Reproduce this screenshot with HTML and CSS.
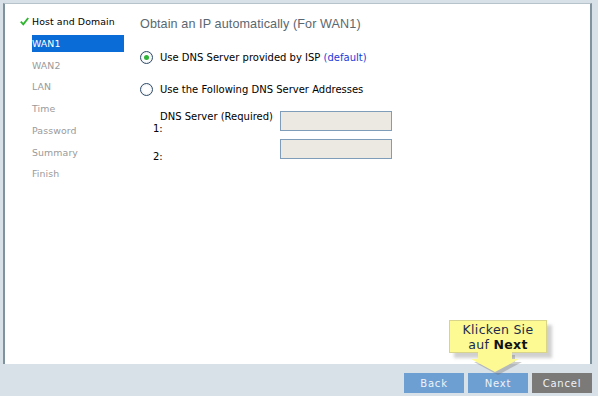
FILE: index.html
```html
<!DOCTYPE html>
<html lang="en">
<head>
  <meta charset="UTF-8" />
  <title>Setup Wizard - DNS</title>
  <link rel="stylesheet" href="styles.css">
</head>
<body>
  <div class="wizard">
    <div class="panel">
      <ul class="steps">
        <li class="step done">
          <svg class="check" width="9" height="9" viewBox="0 0 9 9"><path d="M0.8 4.6 L3.3 7.3 L8.2 1" fill="none" stroke="#2fb52f" stroke-width="1.9"/></svg>
          Host and Domain
        </li>
        <li class="step current">WAN1</li>
        <li class="step">WAN2</li>
        <li class="step">LAN</li>
        <li class="step">Time</li>
        <li class="step">Password</li>
        <li class="step">Summary</li>
        <li class="step">Finish</li>
      </ul>
      <div class="content">
        <h1 class="title">Obtain an IP automatically (For WAN1)</h1>
        <label class="option">
          <span class="radio checked"></span>
          <span>Use DNS Server provided by ISP <span class="hint">(default)</span></span>
        </label>
        <label class="option">
          <span class="radio"></span>
          <span>Use the Following DNS Server Addresses</span>
        </label>
        <div class="fields">
          <div class="field">
            <div class="field-label"><span class="req">DNS Server (Required)</span><span class="num">1:</span></div>
            <div class="input"></div>
          </div>
          <div class="field">
            <div class="field-label"><span class="num">2:</span></div>
            <div class="input"></div>
          </div>
        </div>
      </div>
    </div>
    <div class="footer">
      <button class="btn blue">Back</button>
      <button class="btn blue">Next</button>
      <button class="btn gray">Cancel</button>
      <div class="tip">
        Klicken Sie<br>auf <b>Next</b>
        <svg class="tip-arrow" width="54" height="24" viewBox="0 0 54 24">
          <polygon points="10,3 44,3 44,10 51,10 27,23 3,10 10,10" fill="rgba(110,110,110,0.35)"/>
          <polygon points="7,0 41,0 41,7 48,7 24,20 0,7 7,7" fill="#fdfa93"/>
        </svg>
      </div>
    </div>
  </div>
</body>
</html>
```

FILE: styles.css
```css
* {
  box-sizing: border-box;
  margin: 0;
  padding: 0;
}
body {
  width: 598px;
  height: 396px;
  background: #d9e1e8;
  font-family: Tahoma, "DejaVu Sans", sans-serif;
  font-size: 10px;
  color: #000;
  overflow: hidden;
}
.wizard {
  padding: 3px 6px 0 3px;
  height: 396px;
  display: flex;
  flex-direction: column;
}
.panel {
  height: 361px;
  background: #fff;
  border-top: 1px solid #b7c3cb;
  border-left: 2px solid #7f939f;
  border-right: 2px solid #7f939f;
  display: flex;
}
.steps {
  list-style: none;
  width: 135px;
  padding: 9px 0 0 14px;
  font-size: 9.4px;
}
.step {
  height: 21.75px;
  line-height: 17px;
  padding-left: 13px;
  color: #9a9a9a;
  letter-spacing: 0.1px;
}
.step.done {
  color: #000;
  position: relative;
}
.check {
  position: absolute;
  left: 1px;
  top: 4px;
}
.step.current {
  margin-left: 13px;
  padding-left: 0;
  width: 92px;
  height: 17px;
  margin-bottom: 4.75px;
  background: #0a6cd6;
  color: #fff;
}
.content {
  padding: 10px 0 0 0;
}
.title {
  font-family: "Liberation Sans", Arial, sans-serif;
  font-size: 12.6px;
  font-weight: normal;
  color: #5b6770;
  line-height: 20px;
  margin-bottom: 16px;
  letter-spacing: 0.1px;
}
.option {
  display: flex;
  align-items: center;
  gap: 7px;
  height: 14px;
  margin-bottom: 18px;
}
.hint {
  color: #1a3bd6;
}
.radio {
  width: 13px;
  height: 13px;
  border-radius: 50%;
  border: 1px solid #2d4a69;
  background: radial-gradient(circle, #fff 40%, #dfe3e8 100%);
  display: flex;
  align-items: center;
  justify-content: center;
}
.radio.checked::after {
  content: "";
  width: 5px;
  height: 5px;
  border-radius: 50%;
  background: #2fb33a;
}
.fields {
  padding-left: 13px;
  margin-top: -4px;
}
.field {
  display: flex;
  height: 28px;
}
.field-label {
  width: 127px;
  display: flex;
  flex-direction: column;
  justify-content: flex-end;
  padding-bottom: 3px;
}
.req {
  padding-left: 7px;
  line-height: 12px;
}
.num {
  line-height: 12px;
}
.input {
  width: 112px;
  height: 20px;
  margin-top: 1px;
  background: #ece9e2;
  border: 1px solid #7f9db9;
}
.footer {
  flex: 1;
  display: flex;
  justify-content: flex-end;
  align-items: flex-start;
  gap: 4px;
  padding-top: 9px;
  position: relative;
}
.btn {
  width: 60px;
  height: 20px;
  border: none;
  font-family: Tahoma, "DejaVu Sans", sans-serif;
  font-size: 10px;
  letter-spacing: 0.8px;
  color: #eef3f8;
}
.btn.blue {
  background: #6d9fd3;
}
.btn.gray {
  background: #7b7a78;
}
.tip {
  position: absolute;
  left: 446px;
  top: -44px;
  width: 98px;
  height: 33px;
  background: #fdfa93;
  border: 1px solid #d8d48a;
  box-shadow: 5px 5px 3px rgba(120, 120, 120, 0.35);
  text-align: center;
  font-size: 12.5px;
  line-height: 15px;
  color: #1c2a4d;
  padding-top: 1px;
  letter-spacing: 0.3px;
}
.tip b {
  color: #111;
}
.tip-arrow {
  position: absolute;
  left: 21px;
  top: 31px;
}
```
